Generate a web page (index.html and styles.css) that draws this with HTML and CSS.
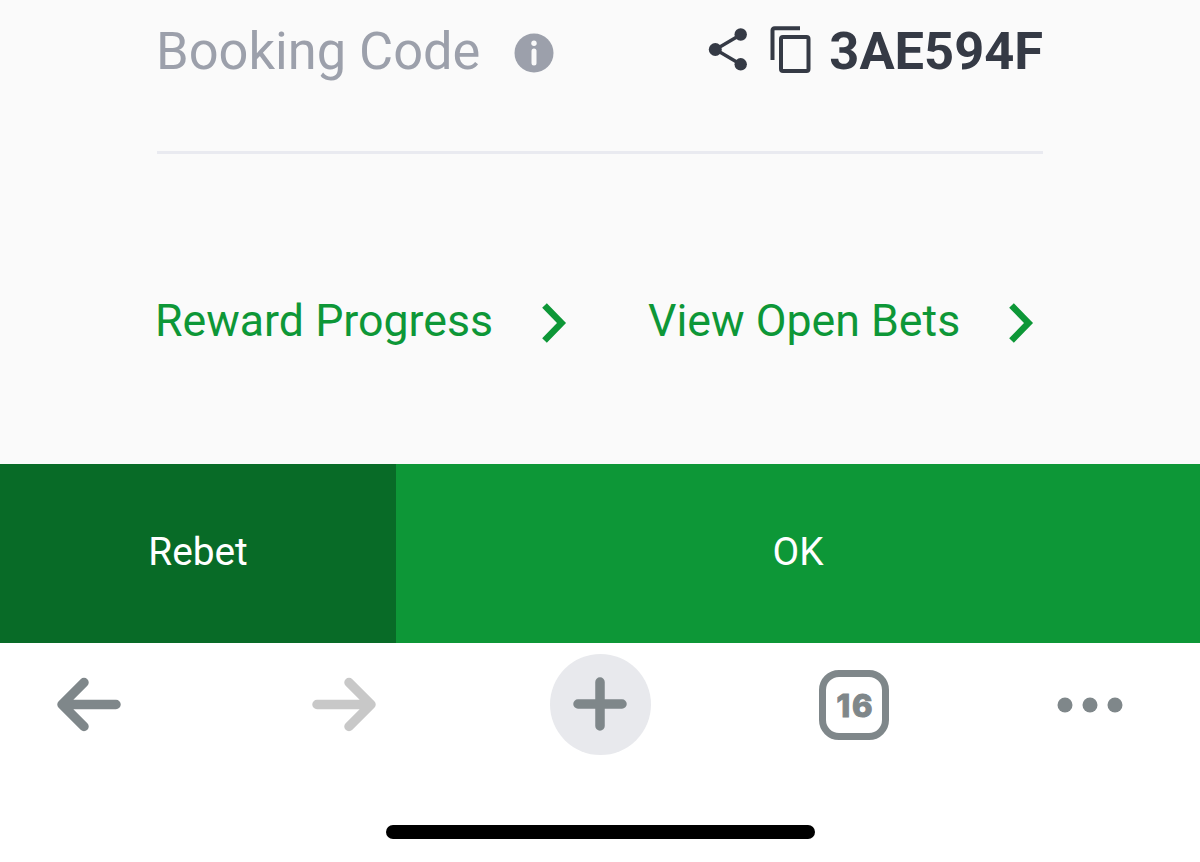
FILE: index.html
```html
<!DOCTYPE html>
<html lang="en">

<head>
    <meta charset="UTF-8">
    <meta name="viewport" content="width=device-width, initial-scale=1.0">
    <title>Booking Code</title>
    <link rel="stylesheet" href="styles.css">
</head>

<body>
    <main class="content">
        <div class="booking">
            <div class="booking-label">
                <span class="label-text">Booking Code</span>
                <svg class="info-icon" width="40" height="40" viewBox="0 0 40 40">
                    <circle cx="20" cy="20" r="19.5" fill="#9ca0ab" />
                    <circle cx="20" cy="10.2" r="2.7" fill="#fafafa" />
                    <path d="M20 18v12" stroke="#fafafa" stroke-width="5" stroke-linecap="round" />
                </svg>
            </div>
            <div class="booking-code">
                <svg class="share-icon" width="40" height="44" viewBox="0 0 40 44">
                    <path d="M33 7.500L7.500 22.500L33 37.500" fill="none" stroke="#353a45" stroke-width="3.400" />
                    <circle cx="32.700" cy="7.500" r="6.200" fill="#353a45" />
                    <circle cx="7.300" cy="22.500" r="6.500" fill="#353a45" />
                    <circle cx="32.700" cy="37.300" r="6.200" fill="#353a45" />
                </svg>
                <svg class="copy-icon" width="42" height="48" viewBox="0 0 42 48" fill="none" stroke="#353a45" stroke-width="4">
                    <path d="M2.500 34V4.500Q2.500 2.200 4.700 2.200H30" />
                    <rect x="11" y="11" width="27.500" height="34" rx="2" />
                </svg>
                <span class="code">3AE594F</span>
            </div>
        </div>
        <div class="links">
            <a class="link" href="#">
                <span class="reward-text">Reward Progress</span>
                <svg class="chevron" width="26" height="40" viewBox="0 0 26 40">
                    <path d="M3.500 2.500L20.500 20L3.500 37.500" fill="none" stroke="#0d9737" stroke-width="6.500" />
                </svg>
            </a>
            <a class="link" href="#">
                <span class="bets-text">View Open Bets</span>
                <svg class="chevron" width="26" height="40" viewBox="0 0 26 40">
                    <path d="M3.500 2.500L20.500 20L3.500 37.500" fill="none" stroke="#0d9737" stroke-width="6.500" />
                </svg>
            </a>
        </div>
    </main>

    <div class="actions">
        <button class="rebet">Rebet</button>
        <button class="ok">OK</button>
    </div>

    <nav class="toolbar">
        <button class="tool" aria-label="Back">
            <svg width="66" height="56" viewBox="0 0 66 56">
                <path d="M28 6.500L6 28.500L28 50.500M8 28.500H60" fill="none" stroke="#7f878a" stroke-width="9.500" stroke-linecap="round" stroke-linejoin="round" />
            </svg>
        </button>
        <button class="tool" aria-label="Forward">
            <svg width="66" height="56" viewBox="0 0 66 56">
                <path d="M38 6.500L60 28.500L38 50.500M58 28.500H6" fill="none" stroke="#c8c8c8" stroke-width="9.500" stroke-linecap="round" stroke-linejoin="round" />
            </svg>
        </button>
        <button class="tool new-tab" aria-label="New tab">
            <svg width="56" height="56" viewBox="0 0 56 56">
                <path d="M28 6V50M6 28H50" stroke="#7f878a" stroke-width="9.500" stroke-linecap="round" />
            </svg>
        </button>
        <button class="tool tabs"><span>16</span></button>
        <button class="tool" aria-label="More">
            <svg width="66" height="18" viewBox="0 0 66 18" fill="#7f878a">
                <circle cx="8" cy="10" r="7.500" />
                <circle cx="33" cy="10" r="7.500" />
                <circle cx="58" cy="10" r="7.500" />
            </svg>
        </button>
    </nav>

    <div class="home-bar"></div>
</body>

</html>
```

FILE: styles.css
```css
* {
    box-sizing: border-box;
}

body {
    margin: 0;
    height: 862px;
    overflow: hidden;
    background-color: #fff;
    font-family: Roboto, sans-serif;
}

svg {
    display: block;
    flex-shrink: 0;
}

button {
    border: none;
    padding: 0;
    background: none;
    font-family: inherit;
    cursor: pointer;
}

.content {
    height: 464px;
    padding: 0 157px;
    background-color: #fafafa;
}

.booking {
    display: flex;
    justify-content: space-between;
    height: 154px;
    padding-top: 20px;
    border-bottom: 3px solid #e9eaf0;
}

.booking-label,
.booking-code {
    display: flex;
    align-items: center;
    height: 62px;
}

.label-text {
    width: 358px;
    margin-left: -1px;
    font-size: 52.4px;
    color: #9ca0ab;
    white-space: nowrap;
}

.info-icon {
    margin-top: 3px;
}

.share-icon {
    margin-right: 22px;
    margin-top: -5px;
}

.copy-icon {
    margin-right: 17px;
    margin-top: -2px;
}

.code {
    font-size: 52.4px;
    font-weight: bold;
    color: #353a45;
}

.links {
    display: flex;
    justify-content: space-between;
    margin-top: 136px;
    padding-right: 9px;
}

.link {
    display: flex;
    align-items: center;
    height: 62px;
    font-size: 44.7px;
    color: #0d9737;
    text-decoration: none;
    white-space: nowrap;
}

.reward-text {
    width: 386px;
    margin-left: -2px;
}

.bets-text {
    width: 360px;
}

.chevron {
    margin-top: 3px;
}

.actions {
    display: flex;
    height: 179px;
}

.actions button {
    padding-bottom: 4px;
    font-size: 38.8px;
    color: #fff;
}

.rebet {
    width: 396px;
    background-color: #086b27;
}

.ok {
    flex: 1;
    background-color: #0d9737;
}

.toolbar {
    display: grid;
    grid-template-columns: 178px 332px 180px 328px 144px;
    justify-items: center;
    align-items: center;
    height: 122px;
}

.tool {
    display: flex;
    justify-content: center;
    align-items: center;
}

.new-tab {
    width: 101px;
    height: 101px;
    border-radius: 50%;
    background-color: #e8e9ed;
}

.tabs {
    width: 70px;
    height: 70px;
    margin-top: 2px;
    border: 7.5px solid #7f878a;
    border-radius: 20px;
    padding-left: 3px;
    font-family: Inter, sans-serif;
    font-size: 31px;
    font-weight: 800;
    letter-spacing: 2px;
    color: #7f878a;
    -webkit-text-stroke: 1px #7f878a;
}

.home-bar {
    width: 429px;
    height: 14px;
    margin: 60px auto 0;
    border-radius: 7px;
    background-color: #000;
}
```
